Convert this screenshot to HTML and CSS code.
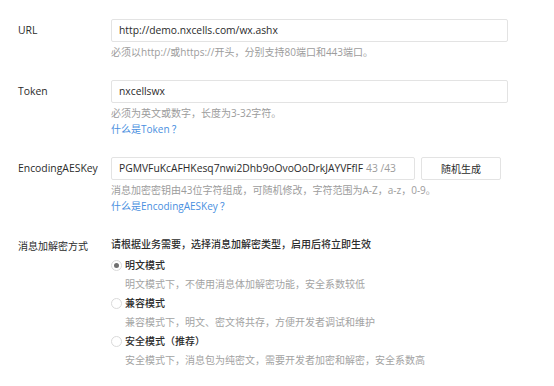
FILE: index.html
```html
<!DOCTYPE html>
<html lang="zh-CN">
<head>
    <meta charset="UTF-8">
    <title>服务器配置</title>
    <link rel="stylesheet" href="styles.css">
</head>
<body>
    <form class="config-form">
        <div class="form-row">
            <label class="form-label">URL</label>
            <div class="form-field">
                <div class="text-input">http://demo.nxcells.com/wx.ashx</div>
                <p class="tip">必须以http://或https://开头，分别支持80端口和443端口。</p>
            </div>
        </div>

        <div class="form-row">
            <label class="form-label">Token</label>
            <div class="form-field">
                <div class="text-input">nxcellswx</div>
                <p class="tip">必须为英文或数字，长度为3-32字符。</p>
                <a href="#" class="help-link">什么是Token<span class="qmark">？</span></a>
            </div>
        </div>

        <div class="form-row">
            <label class="form-label">EncodingAESKey</label>
            <div class="form-field">
                <div class="key-line">
                    <div class="text-input key-input">
                        <span class="key-value">PGMVFuKcAFHKesq7nwi2Dhb9oOvoOoDrkJAYVFflF</span>
                        <span class="counter">43 /43</span>
                    </div>
                    <button type="button" class="btn">随机生成</button>
                </div>
                <p class="tip">消息加密密钥由43位字符组成，可随机修改，字符范围为A-Z，a-z，0-9。</p>
                <a href="#" class="help-link">什么是EncodingAESKey<span class="qmark">？</span></a>
            </div>
        </div>

        <div class="form-row mode-row">
            <label class="form-label cjk">消息加解密方式</label>
            <div class="form-field">
                <p class="mode-intro">请根据业务需要，选择消息加解密类型，启用后将立即生效</p>
                <div class="radio-item">
                    <span class="radio checked"></span>
                    <span class="radio-text">明文模式</span>
                </div>
                <p class="radio-tip">明文模式下，不使用消息体加解密功能，安全系数较低</p>
                <div class="radio-item">
                    <span class="radio"></span>
                    <span class="radio-text">兼容模式</span>
                </div>
                <p class="radio-tip">兼容模式下，明文、密文将共存，方便开发者调试和维护</p>
                <div class="radio-item">
                    <span class="radio"></span>
                    <span class="radio-text">安全模式（推荐）</span>
                </div>
                <p class="radio-tip">安全模式下，消息包为纯密文，需要开发者加密和解密，安全系数高</p>
            </div>
        </div>
    </form>
</body>
</html>
```

FILE: styles.css
```css
* {
    margin: 0;
    padding: 0;
    box-sizing: border-box;
}

body {
    font-family: "Open Sans", "Noto Sans CJK SC", sans-serif;
    font-size: 10px;
    color: #2b2b2b;
    background: #ffffff;
}

.config-form {
    padding: 19px 0 0 18px;
}

.form-row {
    display: flex;
    margin-bottom: 20px;
}

.form-label {
    width: 93px;
    line-height: 23px;
    font-size: 10.4px;
    color: #2b2b2b;
}

.form-label.cjk {
    font-size: 10px;
}

.form-field {
    width: 397px;
}

.text-input {
    height: 23px;
    line-height: 21px;
    padding: 0 7px;
    border: 1px solid #e3e3e3;
    border-radius: 2px;
    font-size: 10.3px;
    color: #2b2b2b;
    white-space: nowrap;
    overflow: hidden;
}

.tip {
    margin-top: 3px;
    line-height: 15px;
    color: #9c9c9c;
}

.help-link {
    display: block;
    line-height: 15px;
    color: #4a8fe0;
    text-decoration: none;
}

.qmark {
    font-family: "Noto Sans CJK SC", sans-serif;
    padding-left: 2px;
}

.key-line {
    display: flex;
    gap: 6px;
}

.key-input {
    width: 304px;
    display: flex;
    gap: 3px;
}

.counter {
    color: #9c9c9c;
}

.btn {
    width: 80px;
    height: 23px;
    border: 1px solid #e3e3e3;
    border-radius: 2px;
    background: #ffffff;
    font-family: inherit;
    font-size: 10px;
    color: #2b2b2b;
}

.mode-row {
    margin-top: 21px;
}

.mode-intro {
    line-height: 19px;
    margin-bottom: 2px;
    font-weight: 500;
}

.radio-item {
    display: flex;
    align-items: center;
    gap: 3px;
    line-height: 19px;
    font-weight: 500;
}

.radio {
    width: 11px;
    height: 11px;
    border: 1px solid #dadada;
    border-radius: 50%;
    display: flex;
    align-items: center;
    justify-content: center;
}

.radio.checked::after {
    content: "";
    width: 5px;
    height: 5px;
    border-radius: 50%;
    background: #707070;
}

.radio-tip {
    padding-left: 14px;
    line-height: 19px;
    color: #a3a3a3;
}
```
